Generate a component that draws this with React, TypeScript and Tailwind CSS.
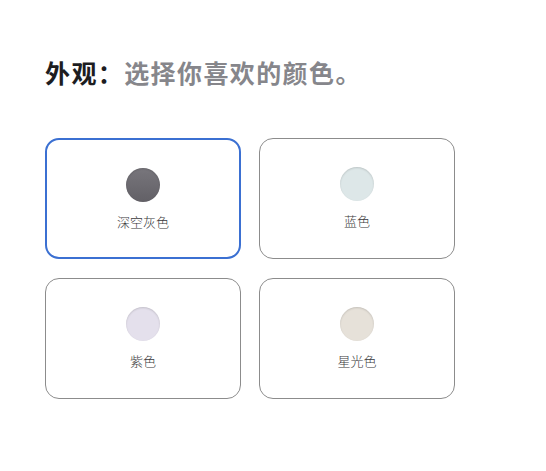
const colors = [
  { name: "深空灰色", swatch: "bg-[linear-gradient(180deg,#78767c,#626066)]", selected: true },
  { name: "蓝色", swatch: "bg-[#dde7e8]", selected: false },
  { name: "紫色", swatch: "bg-[#e4e0ec]", selected: false },
  { name: "星光色", swatch: "bg-[#e6e1d9]", selected: false },
]

export default function App() {
  return (
    <div className="w-[546px] h-[471px] bg-white font-['Noto_Sans_CJK_SC',sans-serif] px-[45px] pt-[56px]">
      <h1 className="text-[25px] leading-[32px] tracking-[1.4px]">
        <span className="font-bold text-[#1d1d1f]">外观：</span>
        <span className="font-semibold text-[#86868b]">选择你喜欢的颜色。</span>
      </h1>
      <div className="grid grid-cols-[196px_196px] gap-x-[18px] gap-y-[19px] mt-[50px]">
        {colors.map((c) => (
          <div
            key={c.name}
            className={
              c.selected
                ? "h-[121px] rounded-[14px] border-2 border-[#3b70d2] flex flex-col items-center pt-[28px]"
                : "h-[121px] rounded-[14px] border border-[#8c8c8c] flex flex-col items-center pt-[28px]"
            }
          >
            <div
              className={`w-[34px] h-[34px] rounded-full ${c.swatch} shadow-[inset_0_1px_2px_rgba(0,0,0,0.15)]`}
            />
            <div className="mt-[10px] text-[13px] leading-[19px] font-light text-[#3a3a3c]">{c.name}</div>
          </div>
        ))}
      </div>
    </div>
  )
}
